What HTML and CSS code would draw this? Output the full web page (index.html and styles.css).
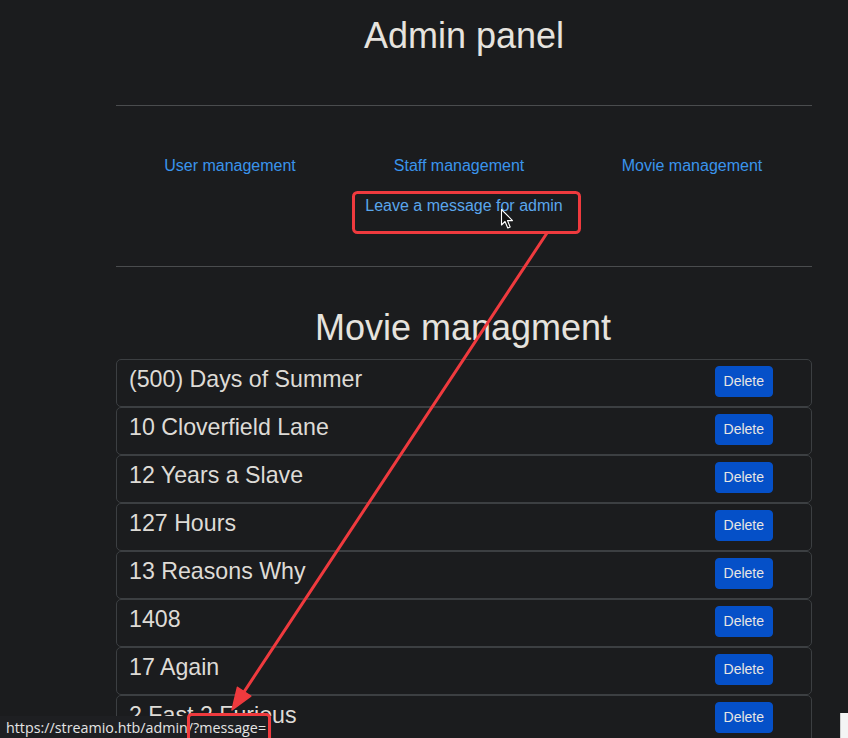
FILE: index.html
```html
<!DOCTYPE html>
<html lang="en">
<head>
<meta charset="utf-8">
<title>Admin panel</title>
<link rel="stylesheet" href="styles.css">
</head>
<body>
<main class="container">
  <h1 class="page-title">Admin panel</h1>
  <hr class="divider divider-top">
  <nav class="admin-links">
    <a class="admin-link" href="#">User management</a>
    <a class="admin-link" href="#">Staff management</a>
    <a class="admin-link" href="#">Movie management</a>
  </nav>
  <div class="message-row">
    <a class="admin-link hovered" href="#">Leave a message for admin</a>
  </div>
  <hr class="divider divider-bottom">
  <h1 class="section-title">Movie managment</h1>
  <ul class="movie-list">
    <li class="movie"><span class="movie-name">(500) Days of Summer</span><button class="btn-delete">Delete</button></li>
    <li class="movie"><span class="movie-name">10 Cloverfield Lane</span><button class="btn-delete">Delete</button></li>
    <li class="movie"><span class="movie-name">12 Years a Slave</span><button class="btn-delete">Delete</button></li>
    <li class="movie"><span class="movie-name">127 Hours</span><button class="btn-delete">Delete</button></li>
    <li class="movie"><span class="movie-name">13 Reasons Why</span><button class="btn-delete">Delete</button></li>
    <li class="movie"><span class="movie-name">1408</span><button class="btn-delete">Delete</button></li>
    <li class="movie"><span class="movie-name">17 Again</span><button class="btn-delete">Delete</button></li>
    <li class="movie"><span class="movie-name">2 Fast 2 Furious</span><button class="btn-delete">Delete</button></li>
  </ul>
</main>

<div class="status-bar">https://streamio.htb/admin/?message=</div>
<div class="edge-widget"></div>

<svg class="annotations" width="848" height="738" viewBox="0 0 848 738" xmlns="http://www.w3.org/2000/svg">
  <rect x="353.5" y="192.5" width="226" height="40" rx="4" fill="none" stroke="#ef3a3e" stroke-width="3"/>
  <line x1="547" y1="233" x2="242" y2="695" stroke="#ef3a3e" stroke-width="3" stroke-linecap="round"/>
  <polygon points="232,710 237.4,687.3 250.8,696.1" fill="#ef3a3e" stroke="#ef3a3e" stroke-width="1.5" stroke-linejoin="round"/>
  <rect x="188.5" y="714.5" width="81" height="30" rx="3" fill="none" stroke="#ef3a3e" stroke-width="3"/>
  <path d="M501.5 209.5 L501.5 225 L505 221.5 L507.8 228 L510.2 227 L507.5 220.6 L512.5 220.6 Z" fill="#111" stroke="#fff" stroke-width="1.1" stroke-linejoin="round"/>
</svg>
</body>
</html>
```

FILE: styles.css
```css
html, body {
  margin: 0;
  padding: 0;
  overflow: hidden;
  background: #1b1c1e;
}

body {
  width: 848px;
  height: 738px;
  position: relative;
  font-family: "Liberation Sans", Arial, sans-serif;
  color: #e3e0db;
}

.container {
  margin-left: 116px;
  width: 696px;
}

.page-title,
.section-title {
  font-size: 36px;
  font-weight: 400;
  line-height: 1.2;
  text-align: center;
  margin: 0;
  color: #e6e3de;
}

.page-title {
  padding-top: 13.6px;
}

.divider {
  border: 0;
  border-top: 1px solid #4a4c4e;
  margin: 0;
  height: 0;
}

.divider-top {
  margin-top: 47.8px;
}

.admin-links {
  display: grid;
  grid-template-columns: repeat(3, 1fr);
  margin-top: 48px;
  font-size: 16px;
  line-height: 24px;
  text-align: center;
}

.admin-link {
  color: #3a94ec;
  text-decoration: none;
}

.admin-links .admin-link:first-child {
  margin-left: -4px;
}

.admin-links .admin-link:nth-child(2) {
  margin-left: -10px;
}

.admin-links .admin-link:last-child {
  margin-left: -8px;
}

.message-row {
  margin-top: 16px;
  font-size: 16px;
  line-height: 24px;
  text-align: center;
}

.admin-link.hovered {
  color: #5aa6ec;
}

.divider-bottom {
  margin-top: 48px;
}

.section-title {
  margin-top: 39px;
  margin-left: -2px;
}

.movie-list {
  list-style: none;
  margin: 10.6px 0 0 0;
  padding: 0;
}

.movie {
  box-sizing: border-box;
  height: 48px;
  border: 1px solid #3c3f42;
  border-radius: 5px;
  padding: 5px 12px 0 12px;
  display: flex;
  align-items: flex-start;
  justify-content: space-between;
}

.movie-name {
  font-size: 23.2px;
  line-height: 29px;
  color: #dedbd6;
}

.btn-delete {
  margin-top: 1px;
  margin-right: 26px;
  font-family: "Liberation Sans", Arial, sans-serif;
  font-size: 14px;
  line-height: 21px;
  padding: 4px 8px;
  border: 1px solid #0550c8;
  border-radius: 4px;
  background: #0550c8;
  color: #e8e6e3;
}

.status-bar {
  position: absolute;
  left: 0;
  top: 716px;
  height: 22px;
  padding: 0 6px 0 6px;
  background: #1e1f22;
  font-family: "Open Sans", "Noto Sans", sans-serif;
  font-size: 14.3px;
  line-height: 24px;
  color: #e4e4e4;
  white-space: nowrap;
}

.edge-widget {
  position: absolute;
  left: 840px;
  top: 713px;
  width: 8px;
  height: 25px;
  background: #f4f4f4;
  border-left: 1px solid #cfcfcf;
  box-sizing: border-box;
}

.annotations {
  position: absolute;
  left: 0;
  top: 0;
  pointer-events: none;
}
```
